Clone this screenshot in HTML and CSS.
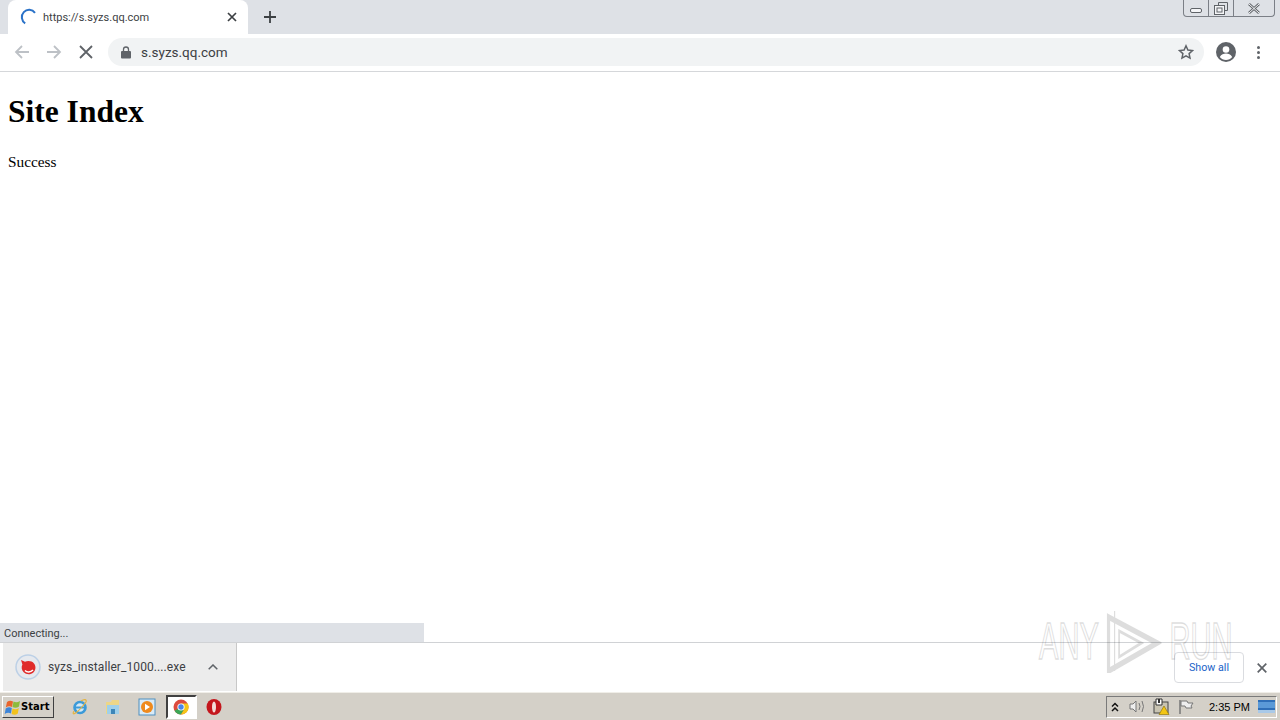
FILE: index.html
```html
<!DOCTYPE html>
<html lang="en">
<head>
    <meta charset="UTF-8">
    <title>https://s.syzs.qq.com</title>
    <link rel="stylesheet" href="styles.css">
</head>
<body>
    <!-- Tab strip -->
    <header class="tabstrip">
        <div class="tab">
            <svg class="spinner" width="18" height="18" viewBox="0 0 18 18"><path d="M15 4.800A7.300 7.300 0 1 0 5.200 15.300" fill="none" stroke="#2a72c8" stroke-width="2"/></svg>
            <span class="tab-title">https://s.syzs.qq.com</span>
            <svg class="tab-close" width="10" height="10" viewBox="0 0 10 10"><path d="M1 1l8 8M9 1l-8 8" stroke="#3c4043" stroke-width="1.700"/></svg>
        </div>
        <svg class="new-tab" width="12" height="12" viewBox="0 0 12 12"><path d="M6 0v12M0 6h12" stroke="#3c4043" stroke-width="1.800"/></svg>
        <div class="window-btns">
            <div class="win-btn win-min"><svg width="12" height="6" viewBox="0 0 12 6"><rect x=".5" y=".5" width="11" height="4" rx="1.500" fill="#f4f5f7" stroke="#5f6368"/></svg></div>
            <div class="win-btn win-max"><svg width="14" height="13" viewBox="0 0 14 13"><path d="M4.500 3V.5h9v8H11" fill="none" stroke="#5f6368"/><rect x=".5" y="3.500" width="10" height="9" fill="#f4f5f7" stroke="#5f6368"/><rect x="3" y="6" width="5" height="4" fill="none" stroke="#5f6368"/></svg></div>
            <div class="win-btn win-close"><svg width="14" height="11" viewBox="0 0 14 11"><path d="M2 1l10 9M12 1L2 10" stroke="#5f6368" stroke-width="2.600"/><path d="M2 1l10 9M12 1L2 10" stroke="#f4f5f7" stroke-width="1"/></svg></div>
        </div>
    </header>

    <!-- Toolbar -->
    <div class="toolbar">
        <svg class="nav-icon" width="16" height="16" viewBox="0 0 16 16"><path d="M15 8H2M8 2L2 8l6 6" fill="none" stroke="#bdc1c6" stroke-width="1.800"/></svg>
        <svg class="nav-icon" width="16" height="16" viewBox="0 0 16 16"><path d="M1 8h13M8 2l6 6-6 6" fill="none" stroke="#bdc1c6" stroke-width="1.800"/></svg>
        <svg class="nav-icon" width="16" height="16" viewBox="0 0 16 16"><path d="M2 2l12 12M14 2L2 14" stroke="#5f6368" stroke-width="1.800"/></svg>
        <div class="omnibox">
            <svg class="lock" width="10" height="13" viewBox="0 0 10 13"><path d="M2.500 5V3.500a2.500 2.500 0 0 1 5 0V5" fill="none" stroke="#5f6368" stroke-width="1.300"/><rect y="5" width="10" height="7.500" rx="1" fill="#5f6368"/></svg>
            <span class="url">s.syzs.qq.com</span>
            <svg class="star" width="16" height="16" viewBox="0 0 16 16"><path d="M8 1.800l1.900 4.200 4.600.5-3.400 3.100.9 4.500L8 11.800l-4 2.300.9-4.500L1.500 6.500l4.600-.5z" fill="none" stroke="#5f6368" stroke-width="1.500"/></svg>
        </div>
        <svg class="avatar" width="20" height="20" viewBox="0 0 20 20"><circle cx="10" cy="10" r="10" fill="#5f6368"/><circle cx="10" cy="7.500" r="3.300" fill="#fff"/><path d="M3.800 15c1.500-2.600 3.800-3.400 6.200-3.400s4.700.8 6.200 3.400c-1.500 1.900-3.700 3-6.200 3s-4.700-1.100-6.200-3z" fill="#fff"/></svg>
        <div class="menu-dots"><span></span><span></span><span></span></div>
    </div>

    <!-- Page content -->
    <main class="page">
        <h1>Site Index</h1>
        <p>Success</p>
        <div class="status-bubble">Connecting...</div>
    </main>

    <!-- Download shelf -->
    <div class="shelf">
        <div class="download-item">
            <svg class="file-icon" width="26" height="26" viewBox="0 0 26 26"><circle cx="13" cy="13" r="12" fill="#e6e9ee" stroke="#bcd0e6" stroke-width="1.500"/><path d="M6 6l4 1.800c3-1.300 7-.8 9 1.700 2.200 2.700 1.900 6.700-.6 8.900-2.700 2.400-7.200 2.300-9.700-.2-2.100-2-2.600-5.300-1.300-7.700z" fill="#e02b2b"/><path d="M10 16.500c2 2 5.500 2 8-.5" stroke="#fff" stroke-width="1.500" fill="none"/></svg>
            <span class="file-name">syzs_installer_1000....exe</span>
            <svg class="chevron" width="10" height="6" viewBox="0 0 10 6"><path d="M.7 5.300L5 1l4.300 4.300" fill="none" stroke="#5f6368" stroke-width="1.500"/></svg>
        </div>
        <div class="show-all">Show all</div>
        <svg class="shelf-close" width="10" height="10" viewBox="0 0 10 10"><path d="M.7.7l8.600 8.600M9.300.7L.7 9.300" stroke="#5f6368" stroke-width="1.700"/></svg>
    </div>

    <!-- Windows taskbar -->
    <footer class="taskbar">
        <div class="start-btn">
            <svg width="17" height="16" viewBox="0 0 17 16"><path d="M3 3c2-1.500 4-1.500 6-.5L8 8C6 7 4 7 1.800 8.500z" fill="#e8642c"/><path d="M9.500 2.500c2 1 4 1 6.500-.5l-1 5.500c-2 1.500-4.500 1.500-6.500.5z" fill="#8dbb3c"/><path d="M1.700 9.500C4 8 6 8 7.800 9L7 14.500c-2-1-4-1-6.300.5z" fill="#3d85d8"/><path d="M8.500 9.500c2 1 4.500 1 6.300-.5l-1 5.500c-2 1.500-4 1.500-6.200.5z" fill="#f2c21c"/></svg>
            <span>Start</span>
        </div>
        <div class="quick-launch">
            <div class="task-icon"><svg width="18" height="18" viewBox="0 0 18 18"><circle cx="9" cy="9.500" r="5.500" fill="#d5e8f5" stroke="#3b9ad9" stroke-width="2.600"/><path d="M4 9.500h10" stroke="#3b9ad9" stroke-width="2"/><path d="M3 13C0 18 5 17 15 4c1-3-2-3-5-1" fill="none" stroke="#e3b341" stroke-width="1.200"/></svg></div>
            <div class="task-icon"><svg width="18" height="18" viewBox="0 0 18 18"><path d="M2 4h5l1-2h7v14H2z" fill="#edd687"/><rect x="3" y="7" width="12" height="9" fill="#9fd0ea"/><rect x="7" y="11" width="4" height="5" fill="#3d86b8"/></svg></div>
            <div class="task-icon"><svg width="18" height="18" viewBox="0 0 18 18"><rect x="1" y="1" width="16" height="16" fill="#d9ebf7" stroke="#4f8fbf"/><circle cx="9" cy="9" r="6" fill="#ef8a1d"/><path d="M7 5.800l5 3.200-5 3.200z" fill="#fff"/></svg></div>
            <div class="task-icon task-active"><svg width="16" height="16" viewBox="0 0 16 16"><circle cx="8" cy="8" r="7.500" fill="#dd4b3e"/><path d="M8 8L1.500 11.800A7.500 7.500 0 0 0 8 15.500l3.700-6z" fill="#3aa757"/><path d="M8 4.500h6.800A7.500 7.500 0 0 1 8 15.500l3-5z" fill="#f5c518"/><circle cx="8" cy="8" r="3.600" fill="#fff"/><circle cx="8" cy="8" r="2.700" fill="#4a86e8"/></svg></div>
            <div class="task-icon"><svg width="16" height="18" viewBox="0 0 16 18"><ellipse cx="8" cy="9" rx="7.500" ry="8" fill="#c4161c"/><ellipse cx="8" cy="9" rx="2" ry="5.500" fill="#f3dcd8"/></svg></div>
        </div>
        <div class="tray">
            <svg width="8" height="10" viewBox="0 0 8 10"><path d="M1 4.500l3-3 3 3M1 9l3-3 3 3" fill="none" stroke="#111" stroke-width="1.500"/></svg>
            <svg class="tray-sound" width="17" height="15" viewBox="0 0 17 15"><path d="M1 5h3l3-3v11l-3-3H1z" fill="#eee" stroke="#777"/><path d="M10 4q2 3.500 0 7M13 2q3 5.500 0 11" fill="none" stroke="#777"/></svg>
            <svg class="tray-net" width="17" height="17" viewBox="0 0 17 17"><rect x="1" y="4" width="14" height="11" fill="#c9c4b2" stroke="#444"/><path d="M3 1h6v6H3z" fill="#fff" stroke="#333"/><rect x="5" y="1" width="2" height="4" fill="#333"/><path d="M11 8l5 8.500H6z" fill="#f3c614" stroke="#8a6d00" stroke-width=".6"/></svg>
            <svg class="tray-flag" width="16" height="16" viewBox="0 0 16 16"><path d="M2 1v14" stroke="#777" stroke-width="1.500"/><path d="M3 2h6l1 2h5l-2 3 1 2H8L7 7H3z" fill="#eee" stroke="#777"/></svg>
            <span class="clock">2:35 PM</span>
            <svg class="tray-desktop" width="17" height="13" viewBox="0 0 17 13"><rect width="17" height="13" fill="#2f6fb8"/><rect y="2" width="17" height="6" fill="#5b9ad8"/><rect y="10" width="17" height="3" fill="#a9c9e8"/></svg>
        </div>
    </footer>

    <!-- Sandbox watermark -->
    <div class="watermark">
        <span>ANY</span>
        <svg class="watermark-logo" width="98" height="64" viewBox="0 0 98 64"><path d="M3 8L90 34 3 62z" fill="none" stroke="#000" stroke-width="6"/><path d="M22 22L62 34 22 48z" fill="none" stroke="#000" stroke-width="3"/><path d="M14 2v60" stroke="#000" stroke-width="2"/></svg>
        <span>RUN</span>
    </div>
</body>
</html>
```

FILE: styles.css
```css
/* General */
* {
    box-sizing: border-box;
}

body {
    margin: 0;
    width: 1280px;
    height: 720px;
    overflow: hidden;
    display: flex;
    flex-direction: column;
    background-color: #fff;
    font-family: 'Roboto', 'Liberation Sans', sans-serif;
    color: #3c4043;
    position: relative;
}

/* Tab strip */
.tabstrip {
    height: 34px;
    background-color: #dee1e6;
    display: flex;
    align-items: flex-end;
    padding-left: 8px;
    flex-shrink: 0;
}

.tab {
    width: 240px;
    height: 34px;
    background-color: #fff;
    border-radius: 8px 8px 0 0;
    display: flex;
    align-items: center;
    padding: 0 11px 0 12px;
}

.spinner {
    flex-shrink: 0;
}

.tab-title {
    flex: 1;
    margin-left: 5px;
    font-size: 11px;
    color: #3c4043;
}

.new-tab {
    margin: 0 0 11px 16px;
}

.window-btns {
    display: flex;
    align-self: flex-start;
    margin-left: auto;
    margin-right: 5px;
    height: 17px;
    border: 1px solid #7b7f86;
    border-top: none;
    border-radius: 0 0 4px 4px;
}

.win-btn {
    display: flex;
    align-items: center;
    justify-content: center;
}

.win-min {
    width: 25px;
    padding-top: 5px;
    border-right: 1px solid #7b7f86;
}

.win-max {
    width: 25px;
    border-right: 1px solid #7b7f86;
}

.win-close {
    width: 40px;
}

/* Toolbar */
.toolbar {
    height: 38px;
    background-color: #fff;
    border-bottom: 1px solid #d5d7da;
    display: flex;
    align-items: center;
    padding: 0 20px 1px 14px;
    flex-shrink: 0;
}

.nav-icon {
    margin-right: 16px;
}

.omnibox {
    flex: 1;
    height: 28px;
    margin: 0 12px 0 -2px;
    background-color: #f1f3f4;
    border-radius: 14px;
    display: flex;
    align-items: center;
    padding: 0 10px 0 13px;
}

.url {
    flex: 1;
    margin-left: 10px;
    font-size: 13.500px;
    color: #3c4043;
}

.menu-dots {
    display: flex;
    flex-direction: column;
    gap: 2px;
    margin-left: 21px;
}

.menu-dots span {
    width: 3px;
    height: 3px;
    border-radius: 50%;
    background-color: #5f6368;
}

/* Page */
.page {
    flex: 1;
    position: relative;
    padding: 21px 8px 0;
    font-family: 'Liberation Serif', serif;
    color: #000;
}

.page h1 {
    margin: 0;
    font-size: 31.500px;
    line-height: 37px;
    font-weight: bold;
}

.page p {
    margin: 23px 0 0;
    font-size: 15.300px;
    line-height: 18px;
}

.status-bubble {
    position: absolute;
    left: 0;
    bottom: 0;
    width: 424px;
    height: 19px;
    padding: 4px 0 0 4px;
    background-color: #dee1e6;
    font-family: 'Roboto', 'Liberation Sans', sans-serif;
    font-size: 11px;
    color: #3c4043;
}

/* Download shelf */
.shelf {
    height: 50px;
    background-color: #fff;
    border-top: 1px solid #d0d2d5;
    display: flex;
    align-items: center;
    flex-shrink: 0;
}

.download-item {
    width: 234px;
    height: 48px;
    margin-left: 3px;
    padding: 0 18px 0 12px;
    background-color: #ececec;
    border-right: 1px solid #c8c8c8;
    display: flex;
    align-items: center;
    align-self: flex-start;
}

.file-name {
    flex: 1;
    margin-left: 7px;
    font-size: 12px;
    letter-spacing: 0.08px;
    color: #3c4043;
}

.show-all {
    margin-left: auto;
    width: 70px;
    height: 31px;
    border: 1px solid #dadce0;
    border-radius: 4px;
    font-size: 10.700px;
    line-height: 29px;
    text-align: center;
    color: #1a63c8;
}

.shelf-close {
    margin: 0 13px;
}

/* Taskbar */
.taskbar {
    height: 28px;
    background-color: #d4d0c8;
    border-top: 1px solid #f0eee8;
    display: flex;
    align-items: center;
    flex-shrink: 0;
}

.start-btn {
    width: 52px;
    height: 22px;
    margin-left: 2px;
    background-color: #d4d0c8;
    border: 1px solid;
    border-color: #fff #404040 #404040 #fff;
    display: flex;
    align-items: center;
    gap: 0;
    padding-left: 1px;
    font-family: 'DejaVu Sans', sans-serif;
    font-size: 10px;
    font-weight: bold;
    color: #000;
}

.quick-launch {
    display: flex;
    align-items: center;
    margin-left: 9px;
}

.task-icon {
    width: 33.500px;
    height: 24px;
    display: flex;
    align-items: center;
    justify-content: center;
}

.task-active {
    width: 31px;
    margin: 0 1px 0 2px;
    background-color: #fff;
    border: 2px solid;
    border-color: #404040 #fff #fff #404040;
}

.tray {
    margin-left: auto;
    margin-right: 3px;
    width: 171px;
    height: 22px;
    border: 1px solid;
    border-color: #7a7a7a #fff #fff #7a7a7a;
    display: flex;
    align-items: center;
    padding: 0 1px 0 4px;
}

.tray-sound {
    margin-left: 10px;
}

.tray-net {
    margin-left: 7px;
}

.tray-flag {
    margin-left: 8px;
}

.clock {
    margin-left: 15px;
    font-family: 'Liberation Sans', sans-serif;
    font-size: 11px;
    color: #000;
}

.tray-desktop {
    margin-left: auto;
}

/* Watermark */
.watermark {
    position: absolute;
    left: 1039px;
    top: 609px;
    display: flex;
    align-items: center;
    gap: 14px;
    opacity: 0.13;
    font-family: 'Liberation Sans', sans-serif;
    font-size: 52px;
    color: transparent;
    -webkit-text-stroke: 1.500px #000;
    transform: scaleX(0.56);
    transform-origin: left center;
    pointer-events: none;
}
```
